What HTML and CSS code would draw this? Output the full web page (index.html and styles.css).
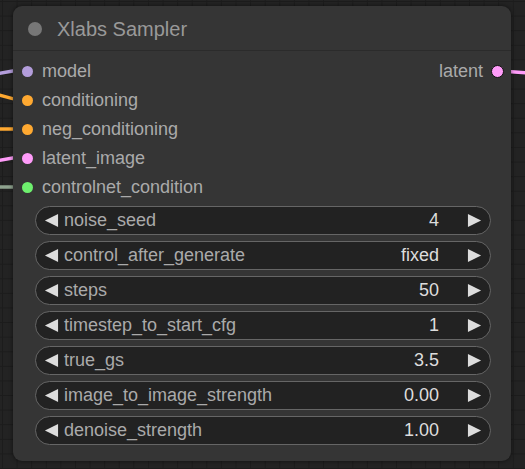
FILE: index.html
```html
<!DOCTYPE html>
<html>
<head>
<meta charset="utf-8">
<link rel="stylesheet" href="styles.css">
</head>
<body>
<svg class="wires" width="525" height="469" viewBox="0 0 525 469">
  <path d="M-4 74 L24 69" stroke="#b39ddb" stroke-width="3.5" fill="none"/>
  <path d="M-4 94 Q8 98 24 101" stroke="#ffa931" stroke-width="3.5" fill="none"/>
  <path d="M-4 129 L24 129" stroke="#ffa931" stroke-width="3.5" fill="none"/>
  <path d="M-4 161 L24 156" stroke="#ff9cf9" stroke-width="3.5" fill="none"/>
  <path d="M-4 187 L24 187" stroke="#8fa38f" stroke-width="3.5" fill="none"/>
  <path d="M500 71 L530 73" stroke="#ff9cf9" stroke-width="3.5" fill="none"/>
</svg>
<div class="node">
  <div class="title">
    <span class="title-dot"></span>
    <span class="title-text">Xlabs Sampler</span>
  </div>
  <div class="slots">
    <div class="slot-row">
      <div class="slot in"><span class="dot model"></span><span>model</span></div>
      <div class="slot out"><span>latent</span><span class="dot latent outdot"></span></div>
    </div>
    <div class="slot-row">
      <div class="slot in"><span class="dot cond"></span><span>conditioning</span></div>
    </div>
    <div class="slot-row">
      <div class="slot in"><span class="dot cond"></span><span>neg_conditioning</span></div>
    </div>
    <div class="slot-row">
      <div class="slot in"><span class="dot latent"></span><span>latent_image</span></div>
    </div>
    <div class="slot-row">
      <div class="slot in"><span class="dot control"></span><span>controlnet_condition</span></div>
    </div>
  </div>
  <div class="widgets">
    <div class="widget"><svg class="arrow" viewBox="0 0 16 16"><path d="M1 8 L15 1 L15 15 Z"/></svg><span class="label">noise_seed</span><span class="value">4</span><svg class="arrow right" viewBox="0 0 16 16"><path d="M15 8 L1 1 L1 15 Z"/></svg></div>
    <div class="widget"><svg class="arrow" viewBox="0 0 16 16"><path d="M1 8 L15 1 L15 15 Z"/></svg><span class="label">control_after_generate</span><span class="value">fixed</span><svg class="arrow right" viewBox="0 0 16 16"><path d="M15 8 L1 1 L1 15 Z"/></svg></div>
    <div class="widget"><svg class="arrow" viewBox="0 0 16 16"><path d="M1 8 L15 1 L15 15 Z"/></svg><span class="label">steps</span><span class="value">50</span><svg class="arrow right" viewBox="0 0 16 16"><path d="M15 8 L1 1 L1 15 Z"/></svg></div>
    <div class="widget"><svg class="arrow" viewBox="0 0 16 16"><path d="M1 8 L15 1 L15 15 Z"/></svg><span class="label">timestep_to_start_cfg</span><span class="value">1</span><svg class="arrow right" viewBox="0 0 16 16"><path d="M15 8 L1 1 L1 15 Z"/></svg></div>
    <div class="widget"><svg class="arrow" viewBox="0 0 16 16"><path d="M1 8 L15 1 L15 15 Z"/></svg><span class="label">true_gs</span><span class="value">3.5</span><svg class="arrow right" viewBox="0 0 16 16"><path d="M15 8 L1 1 L1 15 Z"/></svg></div>
    <div class="widget"><svg class="arrow" viewBox="0 0 16 16"><path d="M1 8 L15 1 L15 15 Z"/></svg><span class="label">image_to_image_strength</span><span class="value">0.00</span><svg class="arrow right" viewBox="0 0 16 16"><path d="M15 8 L1 1 L1 15 Z"/></svg></div>
    <div class="widget"><svg class="arrow" viewBox="0 0 16 16"><path d="M1 8 L15 1 L15 15 Z"/></svg><span class="label">denoise_strength</span><span class="value">1.00</span><svg class="arrow right" viewBox="0 0 16 16"><path d="M15 8 L1 1 L1 15 Z"/></svg></div>
  </div>
</div>
</body>
</html>
```

FILE: styles.css
```css
* { box-sizing: border-box; }
html, body { margin: 0; padding: 0; }
body {
  width: 525px;
  height: 469px;
  overflow: hidden;
  position: relative;
  background-color: #232323;
  background-image:
    linear-gradient(to right, #1c1c1c 1px, transparent 1px),
    linear-gradient(to bottom, #1c1c1c 1px, transparent 1px);
  background-size: 14.6px 14.6px;
  background-position: 2px 1px;
  font-family: "Liberation Sans", Arial, sans-serif;
  padding-top: 6px;
  padding-left: 13px;
}
.wires {
  position: absolute;
  left: 0;
  top: 0;
  z-index: 0;
}
.node {
  position: relative;
  z-index: 1;
  width: 498px;
  height: 455px;
  background: #353535;
  border-radius: 9px;
  box-shadow: 0 0 4px rgba(0,0,0,0.55);
  display: flex;
  flex-direction: column;
}
.title {
  height: 45px;
  border-bottom: 1px solid #2b2b2b;
  display: flex;
  align-items: center;
  padding-left: 15px;
  padding-top: 2px;
}
.title-dot {
  width: 14px;
  height: 14px;
  border-radius: 50%;
  background: #777;
}
.title-text {
  margin-left: 15px;
  font-size: 20px;
  color: #999;
}
.slots {
  padding-top: 6px;
  display: flex;
  flex-direction: column;
}
.slot-row {
  height: 29px;
  display: flex;
  justify-content: space-between;
  align-items: center;
}
.slot {
  display: flex;
  align-items: center;
  font-size: 18px;
  color: #aaa;
}
.slot.in { padding-left: 9px; }
.slot.out { padding-right: 7px; }
.dot {
  width: 11px;
  height: 11px;
  border-radius: 50%;
  display: inline-block;
}
.slot.in .dot { margin-right: 9px; }
.outdot {
  width: 13px;
  height: 13px;
  border: 1.5px solid #111;
  margin-left: 8px;
}
.model { background: #b39ddb; }
.cond { background: #ffa931; }
.latent { background: #ff9cf9; }
.control { background: #6ef06e; }
.widgets {
  padding: 4px 20px 0 22px;
  display: flex;
  flex-direction: column;
  gap: 6px;
}
.widget {
  height: 29px;
  border: 1px solid #666;
  border-radius: 15px;
  background: #222;
  display: flex;
  align-items: center;
  padding: 0 8px 0 8px;
  font-size: 18px;
}
.arrow {
  width: 15px;
  height: 15px;
  fill: #ddd;
  flex: none;
}
.label {
  color: #aaa;
  margin-left: 5px;
  flex: 1;
}
.value {
  color: #ddd;
  margin-right: 28px;
}
```
